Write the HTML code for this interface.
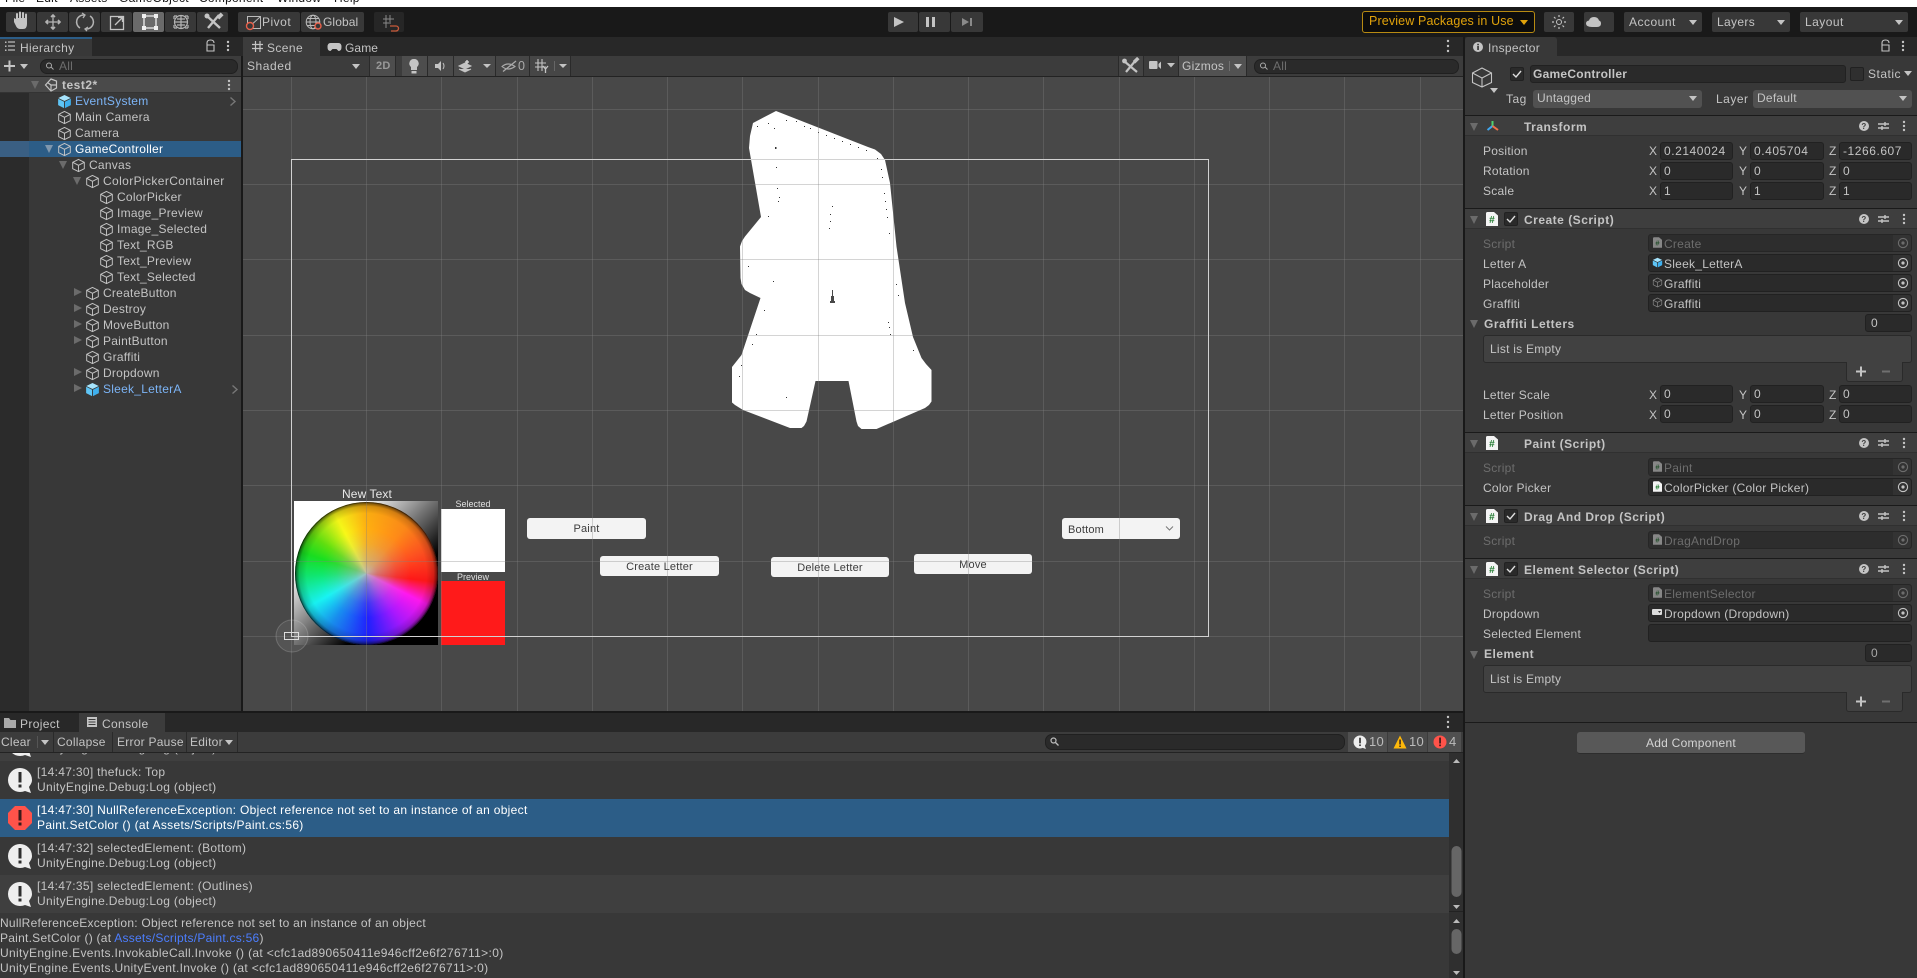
<!DOCTYPE html>
<html><head><meta charset="utf-8"><title>Unity</title>
<style>
html,body{margin:0;padding:0;background:#383838;width:1917px;height:978px;overflow:hidden}
body{position:relative;font-family:"Liberation Sans",sans-serif;font-size:12px;color:#c4c4c4;letter-spacing:.25px}
div,span,svg{position:absolute;box-sizing:border-box}
svg{overflow:visible}
.t{white-space:nowrap;line-height:16px;color:#c4c4c4}
.b{font-weight:bold}
.d{color:#6d6d6d}
.sel{color:#fff}
.blue{color:#7cb4f6}
.tb{top:12px;height:20px;background:#383838;border-radius:2px}
.tbt{top:12px;line-height:20px;color:#c4c4c4;white-space:nowrap;font-size:12px}
.f{background:#2a2a2a;border:1px solid #212121;border-radius:3px;height:18px;line-height:16px;padding-left:3px;color:#c4c4c4;white-space:nowrap}
.o{left:1648px;width:264px;height:18px;background:#2a2a2a;border:1px solid #212121;border-radius:3px}
.o i{position:absolute;right:0;top:0;bottom:0;width:18px;background:#323232;border-radius:0 3px 3px 0}
.h{left:1465px;width:452px;height:21px;background:#3e3e3e;border-top:1px solid #1a1a1a;border-bottom:1px solid #303030}
.dd{background:#515151;border-radius:3px;height:18px;line-height:17px;padding-left:4px;color:#c4c4c4}
.tri{width:0;height:0;border-left:4px solid transparent;border-right:4px solid transparent;border-top:5px solid #c4c4c4}
.fd{width:0;height:0;border-left:4.5px solid transparent;border-right:4.5px solid transparent;border-top:8px solid #6b6b6b}
.fr{width:0;height:0;border-top:4.5px solid transparent;border-bottom:4.5px solid transparent;border-left:8px solid #6b6b6b}
.btn{background:#f3f3f3;border-radius:3px;color:#3c3c3c;font-size:11px;line-height:22px;text-align:center;letter-spacing:.2px}
.log{left:37px;white-space:nowrap;line-height:15px;color:#c4c4c4;letter-spacing:.31px}
.ct{height:20px;top:732px;line-height:20px;color:#c4c4c4;white-space:nowrap}
.sep{width:1px;background:#2a2a2a}
</style></head><body>
<svg width="0" height="0" style="position:absolute">
<symbol id="c" viewBox="0 0 16 16"><path d="M8 1.5L14.2 4.6V11.4L8 14.5L1.8 11.4V4.6ZM1.8 4.6L8 7.8L14.2 4.6M8 7.8V14.5" fill="none" stroke="#c4c4c4" stroke-width="1"/></symbol>
<symbol id="cb" viewBox="0 0 16 16"><path d="M8 1L14.6 4.2L8 7.4L1.4 4.2Z" fill="#a5e3fc"/><path d="M1.2 5L7.5 8.2V15L1.2 11.8Z" fill="#5fc5f6"/><path d="M14.8 5L8.5 8.2V15L14.8 11.8Z" fill="#3fb0ee"/></symbol>
<symbol id="tgt" viewBox="0 0 12 12"><circle cx="6" cy="6" r="4.6" fill="none" stroke="currentColor" stroke-width="1.1"/><circle cx="6" cy="6" r="1.6" fill="currentColor"/></symbol>
<symbol id="scr" viewBox="0 0 12 14"><path d="M0 1.5Q0 0 1.5 0H8L12 3.5V14H0Z" fill="#f4f4f4"/><text x="6" y="11" font-size="10" font-weight="bold" text-anchor="middle" fill="#1f7a2e" font-family="Liberation Sans">#</text></symbol>
<symbol id="hlp" viewBox="0 0 60 14"><circle cx="7" cy="7" r="5" fill="#c4c4c4"/><text x="7" y="10" font-size="8" font-weight="bold" text-anchor="middle" fill="#3e3e3e" font-family="Liberation Sans">?</text><path d="M21 5H32M21 9H32M28 3V7M25 7V11" stroke="#c4c4c4" stroke-width="1.4" fill="none"/><circle cx="47" cy="3" r="1.2" fill="#c4c4c4"/><circle cx="47" cy="7" r="1.2" fill="#c4c4c4"/><circle cx="47" cy="11" r="1.2" fill="#c4c4c4"/></symbol>
<symbol id="info" viewBox="0 0 26 26"><path d="M13 1a12 12 0 1 0 0 24c2 0 3.500-.4 5-1l6 2-2-6c1.200-2 3-4 3-7A12 12 0 0 0 13 1Z" fill="#eee"/><rect x="11.500" y="5" width="3" height="10.500" fill="#2d2d2d"/><rect x="11.500" y="17.500" width="3" height="3" fill="#2d2d2d"/></symbol>
<symbol id="err" viewBox="0 0 26 26"><path d="M8 1H18L25 8V18L18 25H8L1 18V8Z" fill="#ff534a"/><rect x="11.500" y="5" width="3" height="10.500" fill="#3b1b1b"/><rect x="11.500" y="17.500" width="3" height="3" fill="#3b1b1b"/></symbol>
</svg>

<!-- menu strip -->
<div style="left:0;top:0;width:1917px;height:7px;background:#fff;overflow:hidden">
<span class="t" style="left:5px;top:-10px;color:#111">File</span><span class="t" style="left:36px;top:-10px;color:#111">Edit</span><span class="t" style="left:70px;top:-10px;color:#111">Assets</span><span class="t" style="left:119px;top:-10px;color:#111">GameObject</span><span class="t" style="left:199px;top:-10px;color:#111">Component</span><span class="t" style="left:277px;top:-10px;color:#111">Window</span><span class="t" style="left:334px;top:-10px;color:#111">Help</span>
</div>

<!-- toolbar -->
<div style="left:0;top:7px;width:1917px;height:30px;background:#191919"></div>
<div class="tb" style="left:6px;width:30px"></div>
<div class="tb" style="left:37px;width:31px"></div>
<div class="tb" style="left:69px;width:31px"></div>
<div class="tb" style="left:101px;width:31px"></div>
<div class="tb" style="left:133px;width:31px;background:#6a6a6a"></div>
<div class="tb" style="left:165px;width:31px"></div>
<div class="tb" style="left:197px;width:31px"></div>
<svg style="left:0;top:0" width="420" height="37">
<g fill="#c4c4c4"><path d="M14 22V18L16 19V14Q16 13 17 13T18 14V18L19 18V12.500Q19 11.500 20 11.500T21 12.500V18H22V13Q22 12 23 12T24 13V18H25V14.500Q25 13.500 26 13.500T27 14.500V24Q27 29 23 29H20Q18 29 16.500 27Z"/></g>
<g fill="none" stroke="#b4b4b4" stroke-width="1.3"><path d="M53 16V28M47 22H59"/><path d="M51 17L53 15L55 17M51 27L53 29L55 27M48 20L46 22L48 24M58 20L60 22L58 24" stroke-width="1.6"/>
<path d="M80 28A7 7 0 0 1 84 15M90 16A7 7 0 0 1 86 29" stroke-width="1.5"/><path d="M82 13L85 15L83 18M88 27L85 29L87 31" stroke-width="1.3"/>
<rect x="110.500" y="16.500" width="13" height="13" stroke="#c4c4c4"/><path d="M115 25L122 18M118 17.500H122.500V22" stroke="#c4c4c4"/>
<path d="M144 16V28H156V16Z" stroke="#f0f0f0"/></g>
<g fill="#f0f0f0"><rect x="142" y="14" width="4" height="4"/><rect x="154" y="14" width="4" height="4"/><rect x="142" y="26" width="4" height="4"/><rect x="154" y="26" width="4" height="4"/></g>
<g fill="none" stroke="#b4b4b4" stroke-width="1.2"><circle cx="181" cy="22" r="6.500"/><path d="M181 15V29M174 22H188M177 19H185M177 25H185"/><path d="M174 16H177M174 16V19M188 16H185M188 16V19M174 28V25M174 28H177M188 28V25M188 28H185"/></g>
<g fill="none" stroke="#c4c4c4" stroke-width="2.400"><path d="M207 16L220 28M219 15L208 28"/></g><circle cx="207" cy="16" r="2.500" fill="#c4c4c4"/><rect x="217" y="14" width="6" height="4" fill="#c4c4c4" transform="rotate(-45 220 16)"/>
</svg>
<div class="tb" style="left:238px;width:62px"></div>
<div class="tb" style="left:301px;width:63px"></div>
<div class="tb" style="left:374px;width:30px;background:#262626"></div>
<svg style="left:0;top:0" width="420" height="37">
<path d="M247.500 16.500H260.500V28.500H247.500Z" fill="none" stroke="#bbb"/><path d="M248 28L260 17" stroke="#bbb" fill="none"/><circle cx="250" cy="26" r="3.500" fill="#383838" stroke="#e8604a" stroke-width="1.4"/>
<g fill="none" stroke="#bbb"><circle cx="313" cy="22" r="6.800"/><ellipse cx="313" cy="22" rx="3" ry="6.800"/><path d="M306 22H320M307 18.500H319M307 25.500H319"/></g><circle cx="318" cy="26" r="3" fill="#383838" stroke="#e8604a" stroke-width="1.4"/>
<g fill="none" stroke="#888"><path d="M386 15V28M390 15V24M383 19H394M383 23H389"/><path d="M390 26H396A2.500 2.500 0 0 1 396 31H391" stroke="#c85a3a" stroke-width="1.300"/></g>
</svg>
<div class="tbt" style="left:262px;letter-spacing:.5px">Pivot</div>
<div class="tbt" style="left:323px;letter-spacing:.1px">Global</div>
<div class="tb" style="left:888px;width:30px;background:#383838"></div>
<div class="tb" style="left:919px;width:31px"></div>
<div class="tb" style="left:951px;width:32px"></div>
<svg style="left:880px;top:0" width="110" height="37"><path d="M14 17L24 22L14 27Z" fill="#c4c4c4"/><path d="M46 17H49V27H46ZM52 17H55V27H52Z" fill="#c4c4c4"/><path d="M82 18L89 22L82 26Z" fill="#8a8a8a"/><rect x="90" y="18" width="2" height="8" fill="#8a8a8a"/></svg>
<div style="left:1362px;top:11px;width:173px;height:22px;border:1px solid #b78a12;border-radius:3px;background:#0c0c0c"></div>
<div class="t" style="left:1369px;top:13px;color:#e0a20b;font-size:12.500px;letter-spacing:.13px">Preview Packages in Use</div>
<div class="tri" style="left:1520px;top:20px;border-top-color:#e0a20b"></div>
<div class="tb" style="left:1544px;width:30px"></div>
<div class="tb" style="left:1584px;width:30px"></div>
<div class="tb" style="left:1624px;width:78px"></div>
<div class="tb" style="left:1712px;width:78px"></div>
<div class="tb" style="left:1800px;width:108px"></div>
<svg style="left:1540px;top:0" width="80" height="37"><circle cx="19" cy="22" r="2.500" fill="none" stroke="#c4c4c4"/><path d="M19 15V17M19 27V29M12 22H14M24 22H26M14 17L15.500 18.500M24 17L22.500 18.500M14 27L15.500 25.500M24 27L22.500 25.500" stroke="#c4c4c4" stroke-width="1.200"/><path d="M52 27Q46 27 46 23.500Q46 21 49 20.500Q50 17 54 17Q58 17 59 20.500Q61 21 61 23.500Q61 27 57 27Z" fill="#c4c4c4"/></svg>
<div class="tbt" style="left:1629px;letter-spacing:.5px">Account</div><div class="tri" style="left:1689px;top:20px"></div>
<div class="tbt" style="left:1717px;letter-spacing:.35px">Layers</div><div class="tri" style="left:1777px;top:20px"></div>
<div class="tbt" style="left:1805px;letter-spacing:.45px">Layout</div><div class="tri" style="left:1895px;top:20px"></div>

<!-- tab bars -->
<div style="left:0;top:37px;width:1917px;height:19px;background:#282828"></div>
<div style="left:0;top:37px;width:92px;height:19px;background:#383838;border-top:2px solid #2c5d87"></div>
<svg style="left:0;top:37px" width="30" height="19"><path d="M8 5H15M8 9H15M8 13H15" stroke="#bbb" stroke-width="1.300"/><rect x="5" y="4.500" width="1.500" height="1.500" fill="#bbb"/><rect x="5" y="8.500" width="1.500" height="1.500" fill="#bbb"/><rect x="5" y="12.500" width="1.500" height="1.500" fill="#bbb"/></svg>
<div class="t" style="left:20px;top:40px;letter-spacing:.35px">Hierarchy</div>
<svg style="left:200px;top:37px" width="40" height="19"><path d="M7 8V6Q7 3 10.500 3T14 6M7 8H14V14H7Z" fill="none" stroke="#c4c4c4" stroke-width="1.100"/><circle cx="28" cy="5" r="1.200" fill="#c4c4c4"/><circle cx="28" cy="9" r="1.200" fill="#c4c4c4"/><circle cx="28" cy="13" r="1.200" fill="#c4c4c4"/></svg>

<!-- Hierarchy -->
<div style="left:0;top:56px;width:241px;height:21px;background:#3c3c3c;border-bottom:1px solid #232323"></div>
<svg style="left:0;top:56px" width="32" height="20"><path d="M4 10H15M9.500 4.500V15.500" stroke="#c4c4c4" stroke-width="2"/></svg>
<div class="tri" style="left:20px;top:64px"></div>
<div style="left:40px;top:59px;width:198px;height:15px;background:#2a2a2a;border:1px solid #202020;border-radius:7px"></div>
<svg style="left:44px;top:60px" width="12" height="13"><circle cx="5" cy="5.500" r="2.500" fill="none" stroke="#aaa"/><path d="M7 7L9.500 9.500" stroke="#aaa"/></svg>
<div class="t d" style="left:59px;top:58px">All</div>
<div style="left:0;top:77px;width:241px;height:635px;background:#383838"></div>
<div style="left:0;top:77px;width:29px;height:635px;background:#2b2b2b"></div>
<div style="left:0;top:77px;width:241px;height:16px;background:#4a4a4a;border-bottom:1px solid #333"></div>
<div style="left:0;top:141px;width:241px;height:16px;background:#2c5d87"></div>
<div style="left:0;top:141px;width:29px;height:16px;background:#3a5f83"></div>
<div style="left:241px;top:56px;width:2px;height:657px;background:#191919"></div>
<div class="fd" style="left:31px;top:81px"></div>
<svg style="left:44px;top:78px" width="14" height="14"><path d="M7 1L12.500 3V10L7 13L1.500 7L7 1ZM7 7H12.500M7 7L3.500 4.500M7 7V12" fill="none" stroke="#c4c4c4" stroke-width="1.200"/></svg>
<div class="t b" style="left:62px;top:77px;letter-spacing:.5px">test2*</div>
<svg style="left:225px;top:79px" width="8" height="13"><circle cx="4" cy="2" r="1.200" fill="#c4c4c4"/><circle cx="4" cy="6" r="1.200" fill="#c4c4c4"/><circle cx="4" cy="10" r="1.200" fill="#c4c4c4"/></svg>

<svg style="left:57px;top:94px" width="15" height="15"><use href="#cb"/></svg><div class="t blue" style="left:75px;top:93px">EventSystem</div>
<svg style="left:229px;top:97px" width="8" height="9"><path d="M1.500 .5L6 4.500L1.500 8.500" fill="none" stroke="#777" stroke-width="1.400"/></svg>
<svg style="left:57px;top:110px" width="15" height="15"><use href="#c"/></svg><div class="t" style="left:75px;top:109px">Main Camera</div>
<svg style="left:57px;top:126px" width="15" height="15"><use href="#c"/></svg><div class="t" style="left:75px;top:125px">Camera</div>
<div class="fd" style="left:45px;top:145px;border-top-color:#7f97ad"></div>
<svg style="left:57px;top:142px" width="15" height="15"><use href="#c"/></svg><div class="t sel" style="left:75px;top:141px">GameController</div>
<div class="fd" style="left:59px;top:161px"></div>
<svg style="left:71px;top:158px" width="15" height="15"><use href="#c"/></svg><div class="t" style="left:89px;top:157px">Canvas</div>
<div class="fd" style="left:73px;top:177px"></div>
<svg style="left:85px;top:174px" width="15" height="15"><use href="#c"/></svg><div class="t" style="left:103px;top:173px;letter-spacing:.38px">ColorPickerContainer</div>
<svg style="left:99px;top:190px" width="15" height="15"><use href="#c"/></svg><div class="t" style="left:117px;top:189px">ColorPicker</div>
<svg style="left:99px;top:206px" width="15" height="15"><use href="#c"/></svg><div class="t" style="left:117px;top:205px">Image_Preview</div>
<svg style="left:99px;top:222px" width="15" height="15"><use href="#c"/></svg><div class="t" style="left:117px;top:221px">Image_Selected</div>
<svg style="left:99px;top:238px" width="15" height="15"><use href="#c"/></svg><div class="t" style="left:117px;top:237px">Text_RGB</div>
<svg style="left:99px;top:254px" width="15" height="15"><use href="#c"/></svg><div class="t" style="left:117px;top:253px">Text_Preview</div>
<svg style="left:99px;top:270px" width="15" height="15"><use href="#c"/></svg><div class="t" style="left:117px;top:269px">Text_Selected</div>
<div class="fr" style="left:74px;top:288px"></div><svg style="left:85px;top:286px" width="15" height="15"><use href="#c"/></svg><div class="t" style="left:103px;top:285px">CreateButton</div>
<div class="fr" style="left:74px;top:304px"></div><svg style="left:85px;top:302px" width="15" height="15"><use href="#c"/></svg><div class="t" style="left:103px;top:301px">Destroy</div>
<div class="fr" style="left:74px;top:320px"></div><svg style="left:85px;top:318px" width="15" height="15"><use href="#c"/></svg><div class="t" style="left:103px;top:317px">MoveButton</div>
<div class="fr" style="left:74px;top:336px"></div><svg style="left:85px;top:334px" width="15" height="15"><use href="#c"/></svg><div class="t" style="left:103px;top:333px">PaintButton</div>
<svg style="left:85px;top:350px" width="15" height="15"><use href="#c"/></svg><div class="t" style="left:103px;top:349px">Graffiti</div>
<div class="fr" style="left:74px;top:368px"></div><svg style="left:85px;top:366px" width="15" height="15"><use href="#c"/></svg><div class="t" style="left:103px;top:365px">Dropdown</div>
<div class="fr" style="left:74px;top:384px"></div><svg style="left:85px;top:382px" width="15" height="15"><use href="#cb"/></svg><div class="t blue" style="left:103px;top:381px">Sleek_LetterA</div>
<svg style="left:231px;top:385px" width="8" height="9"><path d="M1.500 .5L6 4.500L1.500 8.500" fill="none" stroke="#777" stroke-width="1.400"/></svg>

<!-- Scene tabs & toolbar -->
<div style="left:243px;top:37px;width:77px;height:19px;background:#3c3c3c"></div>
<svg style="left:251px;top:40px" width="14" height="14"><path d="M4.500 1V12M9 1V12M1 4.500H12M1 8.500H12" stroke="#c4c4c4" stroke-width="1.200"/></svg>
<div class="t" style="left:267px;top:40px;letter-spacing:.4px">Scene</div>
<svg style="left:327px;top:41px" width="16" height="12"><path d="M3 2H11Q14 2 14 6T11 10L9 8H5L3 10Q0 10 0 6T3 2Z" fill="#c4c4c4" transform="translate(.5 0)"/></svg>
<div class="t" style="left:345px;top:40px;letter-spacing:.1px">Game</div>
<svg style="left:1444px;top:38px" width="8" height="16"><circle cx="4" cy="3" r="1.200" fill="#c4c4c4"/><circle cx="4" cy="8" r="1.200" fill="#c4c4c4"/><circle cx="4" cy="13" r="1.200" fill="#c4c4c4"/></svg>
<div style="left:243px;top:56px;width:1220px;height:21px;background:#3c3c3c;border-bottom:1px solid #232323"></div>
<div class="t" style="left:247px;top:58px;letter-spacing:.55px">Shaded</div>
<div class="tri" style="left:352px;top:64px"></div>
<div class="sep" style="left:369px;top:56px;height:20px"></div>
<div style="left:370px;top:56px;width:25px;height:20px;background:#4d4d4d"></div><div class="t b" style="left:376px;top:58px;color:#999;font-size:11px">2D</div>
<div class="sep" style="left:395px;top:56px;height:20px"></div>
<div style="left:402px;top:56px;width:25px;height:20px;background:#4d4d4d"></div>
<div style="left:427px;top:56px;width:26px;height:20px;background:#4a4a4a"></div>
<div style="left:454px;top:56px;width:41px;height:20px;background:#4a4a4a"></div>
<div style="left:496px;top:56px;width:33px;height:20px;background:#464646"></div>
<div style="left:530px;top:56px;width:40px;height:20px;background:#464646"></div>
<div class="sep" style="left:427px;top:56px;height:20px"></div><div class="sep" style="left:453px;top:56px;height:20px"></div><div class="sep" style="left:495px;top:56px;height:20px"></div><div class="sep" style="left:529px;top:56px;height:20px"></div><div class="sep" style="left:570px;top:56px;height:20px"></div>
<svg style="left:400px;top:56px" width="180" height="20"><path d="M14 3A4.500 4.500 0 0 1 17 11V14H11V11A4.500 4.500 0 0 1 14 3Z" fill="#c4c4c4"/><rect x="11.500" y="15" width="5" height="2.500" fill="#c4c4c4"/>
<path d="M35 8H38L41 5V15L38 12H35Z" fill="#c4c4c4"/><path d="M43 7Q45 10 43 13" stroke="#c4c4c4" fill="none"/>
<path d="M59 10L65 7L71 10L65 13ZM59 13L65 16L71 13" fill="#c4c4c4" stroke="#c4c4c4"/><path d="M67 4V8M65 6H69" stroke="#ddd" stroke-width="1.300"/>
<path d="M83 8H91L87 12Z" fill="#c4c4c4"/>
<path d="M102 10.500Q108 5.500 115 10.500Q108 15.500 102 10.500Z" fill="none" stroke="#aaa" stroke-width="1.100"/><path d="M103 15.500L116 5" stroke="#aaa" stroke-width="1.300"/>
<g stroke="#c4c4c4" stroke-width="1.100" fill="none"><path d="M138 3V15M142 3V15M135 7H146M135 11H146"/><path d="M143 10L145.500 13L148 10M145.500 13V17" stroke-width="1.300"/></g>
<path d="M154.500 5V15" stroke="#666"/><path d="M159 8H167L163 12Z" fill="#c4c4c4"/></svg>
<div class="t" style="left:518px;top:58px;color:#aaa;font-size:12.500px">0</div>
<div class="sep" style="left:1118px;top:56px;height:20px"></div><div class="sep" style="left:1143px;top:56px;height:20px"></div><div class="sep" style="left:1178px;top:56px;height:20px"></div><div class="sep" style="left:1246px;top:56px;height:20px"></div>
<div style="left:1119px;top:56px;width:24px;height:20px;background:#444"></div>
<div style="left:1179px;top:56px;width:67px;height:20px;background:#525252"></div>
<svg style="left:1120px;top:57px" width="24" height="19"><path d="M4 4L17 15M16 3L6 15" stroke="#c4c4c4" stroke-width="2.200"/><circle cx="4.500" cy="4" r="2.400" fill="#c4c4c4"/><rect x="13" y="1.500" width="6" height="3.500" fill="#c4c4c4" transform="rotate(-45 16 3)"/></svg>
<svg style="left:1148px;top:59px" width="28" height="14"><rect x="1" y="2" width="8.500" height="8" rx="1" fill="#c4c4c4"/><path d="M10.500 5L13 2.500V10L10.500 7.500Z" fill="#c4c4c4"/><path d="M19 4H27L23 8.500Z" fill="#c4c4c4"/></svg>
<div class="t" style="left:1182px;top:58px;letter-spacing:.25px">Gizmos</div>
<div style="left:1229px;top:61px;width:1px;height:10px;background:#707070"></div>
<div class="tri" style="left:1234px;top:64px"></div>
<div style="left:1254px;top:59px;width:205px;height:15px;background:#2a2a2a;border:1px solid #202020;border-radius:7px"></div>
<svg style="left:1258px;top:60px" width="12" height="13"><circle cx="5" cy="5.500" r="2.500" fill="none" stroke="#aaa"/><path d="M7 7L9.500 9.500" stroke="#aaa"/></svg>
<div class="t d" style="left:1273px;top:58px">All</div>

<!-- Scene view -->
<div style="left:243px;top:77px;width:1220px;height:635px;background:#484848;overflow:hidden"></div>
<svg style="left:0;top:0" width="1917" height="978">
<polygon fill="#fff" points="776,111 868,147 875,149.500 881,154 885,160 890,183 896.500,246.500 905,303 913,337 921.500,358 926,364 931.500,370 931.500,401.500 929,405 925,408 876.500,429 861.500,429 858,426 856.500,421.500 848.500,381 815.500,381 806.500,421.500 804,426 801.500,428 790,428 743,410 735,405 732,402.500 732,367 741.500,355 760.500,298 750,293 745,290 741.500,284 740.500,278 740,246.500 742,241 745,236.500 761,217 749,148 750,136 753,123"/>
<g fill="#333"><rect x="775" y="147" width="1.500" height="2"/><rect x="776" y="167" width="1" height="1"/><rect x="777" y="188" width="1" height="1"/><rect x="779" y="197" width="1" height="1"/><rect x="778" y="201" width="1" height="1"/><rect x="768" y="216" width="1" height="1"/><rect x="832" y="206" width="1" height="1"/><rect x="830" y="214" width="1" height="1"/><rect x="830" y="221" width="1" height="1"/><rect x="829" y="228" width="1" height="1"/><rect x="889" y="233" width="1" height="1"/><rect x="887" y="217" width="1" height="1"/><rect x="886" y="209" width="1" height="1"/><rect x="885" y="201" width="1" height="1"/><rect x="884" y="193" width="1" height="1"/><rect x="882" y="177" width="1" height="1"/><rect x="881" y="169" width="1" height="1"/><rect x="796" y="121" width="1" height="1"/><rect x="804" y="126" width="1" height="1"/><rect x="810" y="128" width="1" height="1"/><rect x="818" y="132" width="1" height="1"/><rect x="826" y="135" width="1" height="1"/><rect x="834" y="138" width="1" height="1"/><rect x="842" y="141" width="1" height="1"/><rect x="850" y="144" width="1" height="1"/><rect x="858" y="147" width="1" height="1"/><rect x="866" y="150" width="1" height="1"/><rect x="877" y="158" width="1" height="1"/><rect x="757" y="126" width="1" height="1"/><rect x="768" y="123" width="1" height="1"/><rect x="786" y="120" width="1" height="1"/><rect x="774" y="128" width="1" height="1"/><rect x="748" y="266" width="1" height="1"/><rect x="773" y="281" width="1" height="1"/><rect x="896" y="284" width="1" height="1"/><rect x="898" y="295" width="1" height="1"/><rect x="764" y="310" width="1" height="1"/><rect x="888" y="322" width="1" height="1"/><rect x="889" y="327" width="1" height="1"/><rect x="890" y="334" width="1" height="1"/><rect x="756" y="334" width="1" height="1"/><rect x="752" y="344" width="1" height="1"/><rect x="913" y="350" width="1" height="1"/><rect x="741" y="365" width="1" height="1"/><rect x="739" y="376" width="1" height="1"/><rect x="786" y="397" width="1" height="1"/></g>
<path d="M832 290H833V296H834V301H835V303H830V301H831V296H832Z" fill="#484848"/>
</svg>

<!-- Color picker -->
<div style="left:294px;top:501px;width:144px;height:144px;background:linear-gradient(135deg,#fff 24%,#9a9a9a 42%,#6a6a6a 50%,#000 68%)"></div>
<div style="left:294.500px;top:501.500px;width:143px;height:143px;border-radius:50%;background:conic-gradient(#ffb010 0deg,#ff8a18 40deg,#ff5020 70deg,#ff1818 97deg,#ff18f0 117deg,#a818ff 145deg,#2020ff 178deg,#1890f0 215deg,#18f4f4 240deg,#10e870 268deg,#18e020 288deg,#60e010 305deg,#f8f818 332deg,#ffb010 360deg)"></div>
<div style="left:294.500px;top:501.500px;width:143px;height:143px;border-radius:50%;background:radial-gradient(circle closest-side,rgba(185,185,185,.9) 0,rgba(180,180,180,.55) 15%,rgba(180,180,180,.15) 42%,rgba(0,0,0,0) 62%,rgba(0,0,0,.02) 84%,rgba(0,0,0,.18) 94%,rgba(0,0,0,.5) 98%,rgba(0,0,0,.9) 100%)"></div>
<div style="left:441px;top:509px;width:64px;height:63px;background:#fff"></div>
<div style="left:441px;top:581px;width:64px;height:64px;background:#ff1a1a"></div>
<div class="t" style="left:294px;width:146px;text-align:center;top:486px;font-size:12px;color:#e8e8e8;letter-spacing:.1px">New Text</div>
<div class="t" style="left:441px;width:64px;text-align:center;top:496px;font-size:9px;color:#e0e0e0;letter-spacing:0">Selected</div>
<div class="t" style="left:441px;width:64px;text-align:center;top:569px;font-size:9px;color:#e0e0e0;letter-spacing:0">Preview</div>

<div class="btn" style="left:527px;top:518px;width:119px;height:21px">Paint</div>
<div class="btn" style="left:600px;top:556px;width:119px;height:20px;line-height:23px">Create Letter</div>
<div class="btn" style="left:771px;top:557px;width:118px;height:20px;line-height:23px">Delete Letter</div>
<div class="btn" style="left:914px;top:554px;width:118px;height:20px;">Move</div>
<div class="btn" style="left:1062px;top:518px;width:118px;height:21px;text-align:left;padding-left:6px;line-height:24px">Bottom</div>
<svg style="left:1165px;top:525px" width="10" height="8"><path d="M1 1.500L4.500 5L8 1.500" fill="none" stroke="#777"/></svg>

<!-- Grid overlay -->
<svg style="left:0;top:0;pointer-events:none" width="1917" height="978">
<g stroke="rgba(128,128,128,.34)" stroke-width="1"><path d="M366.500 77V712M441.500 77V712M517.500 77V712M592.500 77V712M667.500 77V712M742.500 77V712M818.500 77V712M893.500 77V712M968.500 77V712M1043.500 77V712M1119.500 77V712M1194.500 77V712M1269.500 77V712M1344.500 77V712M1420.500 77V712"/>
<path d="M243 109.500H1463M243 184.500H1463M243 259.500H1463M243 335.500H1463M243 410.500H1463M243 485.500H1463M243 561.500H1463M243 636.500H1463"/></g>
<path d="M291.500 77V712" stroke="rgba(128,128,128,.34)"/>
<rect x="291.500" y="159.500" width="917" height="477" fill="none" stroke="#d2d2d2"/>
<circle cx="292" cy="636" r="16" fill="rgba(200,200,200,.1)" stroke="rgba(210,210,210,.25)"/>
<rect x="284.500" y="632.500" width="14" height="7" fill="none" stroke="#ddd"/>
</svg>

<!-- Console -->
<div style="left:0;top:711px;width:1464px;height:2px;background:#191919"></div>
<div style="left:0;top:713px;width:1464px;height:19px;background:#282828"></div>
<div style="left:79px;top:713px;width:86px;height:19px;background:#3c3c3c"></div>
<svg style="left:4px;top:716px" width="14" height="13"><path d="M0 2H5L6.500 4H12V12H0Z" fill="#aaa"/></svg>
<div class="t" style="left:20px;top:716px;letter-spacing:.35px">Project</div>
<svg style="left:87px;top:717px" width="12" height="12"><rect x="0" y="0" width="10" height="10" fill="#c4c4c4"/><path d="M1.500 2.500H8.500M1.500 5H8.500M1.500 7.500H8.500" stroke="#3c3c3c"/></svg>
<div class="t" style="left:102px;top:716px;letter-spacing:.35px">Console</div>
<svg style="left:1444px;top:714px" width="8" height="16"><circle cx="4" cy="3" r="1.200" fill="#c4c4c4"/><circle cx="4" cy="8" r="1.200" fill="#c4c4c4"/><circle cx="4" cy="13" r="1.200" fill="#c4c4c4"/></svg>
<div style="left:0;top:732px;width:1464px;height:21px;background:#3c3c3c;border-bottom:1px solid #232323"></div>
<div class="ct" style="left:1px">Clear</div><div class="sep" style="left:37px;top:736px;height:12px;background:#555"></div><div class="tri" style="left:41px;top:740px"></div><div class="sep" style="left:53px;top:732px;height:20px"></div>
<div class="ct" style="left:57px">Collapse</div><div class="sep" style="left:112px;top:732px;height:20px"></div>
<div class="ct" style="left:117px">Error Pause</div><div class="sep" style="left:186px;top:732px;height:20px"></div>
<div class="ct" style="left:190px">Editor</div><div class="tri" style="left:225px;top:740px"></div><div class="sep" style="left:237px;top:732px;height:20px"></div>
<div style="left:1045px;top:734px;width:300px;height:16px;background:#2a2a2a;border:1px solid #202020;border-radius:7px"></div>
<svg style="left:1049px;top:736px" width="12" height="12"><circle cx="4.500" cy="4.500" r="2.500" fill="none" stroke="#bbb" stroke-width="1.200"/><path d="M6.500 6.500L9.500 9.500" stroke="#bbb" stroke-width="1.300"/></svg>
<div style="left:1348px;top:732px;width:39px;height:20px;background:#505050"></div>
<div style="left:1388px;top:732px;width:39px;height:20px;background:#4a4a4a"></div>
<div style="left:1428px;top:732px;width:33px;height:20px;background:#505050"></div>
<svg style="left:1353px;top:735px" width="14" height="14"><use href="#info"/></svg>
<div class="ct" style="left:1369px;font-size:13px;color:#bbb">10</div>
<svg style="left:1393px;top:735px" width="14" height="14"><path d="M7 .5L13.500 13.500H.5Z" fill="#fdb80a"/><rect x="6.300" y="4.500" width="1.500" height="5" fill="#322"/><rect x="6.300" y="10.500" width="1.500" height="1.500" fill="#322"/></svg>
<div class="ct" style="left:1409px;font-size:13px;color:#bbb">10</div>
<svg style="left:1433px;top:735px" width="14" height="14"><circle cx="7" cy="7" r="6.500" fill="#ff534a"/><rect x="6.200" y="2.500" width="1.700" height="6" fill="#3b1b1b"/><rect x="6.200" y="9.500" width="1.700" height="1.700" fill="#3b1b1b"/></svg>
<div class="ct" style="left:1449px;font-size:13px;color:#bbb">4</div>

<div style="left:0;top:753px;width:1449px;height:8px;background:#3f3f3f;overflow:hidden">
<svg style="left:7px;top:-22px" width="26" height="27"><use href="#info" width="26" height="26"/></svg>
<div class="log" style="top:-12px">UnityEngine.Debug:Log (object)</div>
</div>
<div style="left:0;top:761px;width:1449px;height:38px;background:#383838"></div>
<div style="left:0;top:799px;width:1449px;height:38px;background:#2c5d87"></div>
<div style="left:0;top:837px;width:1449px;height:38px;background:#383838"></div>
<div style="left:0;top:875px;width:1449px;height:38px;background:#3f3f3f"></div>
<div style="left:0;top:913px;width:1449px;height:65px;background:#383838"></div>
<div style="left:1449px;top:753px;width:14px;height:225px;background:#2f2f2f"></div>
<div style="left:1449px;top:911px;width:14px;height:1px;background:#222"></div>
<svg style="left:7px;top:767px" width="26" height="27"><use href="#info" width="26" height="26"/></svg>
<svg style="left:7px;top:805px" width="26" height="27"><use href="#err" width="26" height="26"/></svg>
<svg style="left:7px;top:843px" width="26" height="27"><use href="#info" width="26" height="26"/></svg>
<svg style="left:7px;top:881px" width="26" height="27"><use href="#info" width="26" height="26"/></svg>
<div class="log" style="top:765px">[14:47:30] thefuck: Top</div>
<div class="log" style="top:780px">UnityEngine.Debug:Log (object)</div>
<div class="log" style="top:803px;color:#fff">[14:47:30] NullReferenceException: Object reference not set to an instance of an object</div>
<div class="log" style="top:818px;color:#fff">Paint.SetColor () (at Assets/Scripts/Paint.cs:56)</div>
<div class="log" style="top:841px">[14:47:32] selectedElement: (Bottom)</div>
<div class="log" style="top:856px">UnityEngine.Debug:Log (object)</div>
<div class="log" style="top:879px">[14:47:35] selectedElement: (Outlines)</div>
<div class="log" style="top:894px">UnityEngine.Debug:Log (object)</div>
<div class="log" style="left:0;top:916px;letter-spacing:.25px">NullReferenceException: Object reference not set to an instance of an object</div>
<div class="log" style="left:0;top:931px;letter-spacing:.25px">Paint.SetColor () (at <span style="position:static;color:#4c7eff">Assets/Scripts/Paint.cs:56</span>)</div>
<div class="log" style="left:0;top:946px;letter-spacing:.34px">UnityEngine.Events.InvokableCall.Invoke () (at &lt;cfc1ad890650411e946cff2e6f276711&gt;:0)</div>
<div class="log" style="left:0;top:961px;letter-spacing:.34px">UnityEngine.Events.UnityEvent.Invoke () (at &lt;cfc1ad890650411e946cff2e6f276711&gt;:0)</div>
<svg style="left:1449px;top:753px" width="14" height="225">
<path d="M4 10L7.500 6L11 10Z" fill="#bbb"/><rect x="2.500" y="93" width="10" height="51" rx="5" fill="#666"/><path d="M4 152L7.500 156L11 152Z" fill="#bbb"/>
<path d="M4 170L7.500 166L11 170Z" fill="#bbb"/><rect x="2.500" y="176" width="10" height="25" rx="5" fill="#666"/><path d="M4 218L7.500 222L11 218Z" fill="#bbb"/></svg>
<div style="left:1463px;top:37px;width:2px;height:941px;background:#191919"></div>

<!-- Inspector -->
<div style="left:1465px;top:37px;width:452px;height:941px;background:#383838"></div>
<div style="left:1465px;top:37px;width:452px;height:19px;background:#282828"></div>
<div style="left:1465px;top:37px;width:92px;height:19px;background:#383838;border-radius:3px 3px 0 0"></div>
<svg style="left:1472px;top:41px" width="12" height="12"><circle cx="6" cy="6" r="5" fill="#c4c4c4"/><rect x="5.200" y="5" width="1.700" height="4" fill="#383838"/><rect x="5.200" y="2.800" width="1.700" height="1.500" fill="#383838"/></svg>
<div class="t" style="left:1488px;top:40px;letter-spacing:.3px">Inspector</div>
<svg style="left:1880px;top:37px" width="32" height="19"><path d="M2 8V6Q2 3 5.500 3T9 6M2 8H9V14H2Z" fill="none" stroke="#c4c4c4" stroke-width="1.100"/><circle cx="23" cy="5" r="1.200" fill="#c4c4c4"/><circle cx="23" cy="9" r="1.200" fill="#c4c4c4"/><circle cx="23" cy="13" r="1.200" fill="#c4c4c4"/></svg>

<svg style="left:1471px;top:66px" width="22" height="22"><path d="M11 2L20.500 7V16.500L11 21L1.500 16.500V7ZM1.500 7L11 12L20.500 7M11 12V21" fill="none" stroke="#c4c4c4" stroke-width="1.100"/></svg>
<div class="tri" style="left:1490px;top:88px"></div>
<div style="left:1510px;top:67px;width:14px;height:14px;background:#2a2a2a;border:1px solid #212121;border-radius:2px"></div>
<svg style="left:1512px;top:69px" width="10" height="10"><path d="M1 5L4 8L9 2" fill="none" stroke="#ddd" stroke-width="1.400"/></svg>
<div class="f b" style="left:1530px;top:65px;width:316px;height:18px;padding-left:2px">GameController</div>
<div style="left:1850px;top:67px;width:14px;height:14px;background:#2f2f2f;border:1px solid #212121;border-radius:2px"></div>
<div class="t" style="left:1868px;top:66px;letter-spacing:.5px">Static</div>
<div class="tri" style="left:1904px;top:71px"></div>
<div class="t" style="left:1506px;top:91px;letter-spacing:.5px">Tag</div>
<div class="dd" style="left:1533px;top:90px;width:169px">Untagged</div><div class="tri" style="left:1689px;top:96px"></div>
<div class="t" style="left:1716px;top:91px;letter-spacing:.5px">Layer</div>
<div class="dd" style="left:1753px;top:90px;width:159px">Default</div><div class="tri" style="left:1899px;top:96px"></div>

<!-- Transform -->
<div class="h" style="top:115px"></div>
<div class="fd" style="left:1470px;top:123px"></div>
<svg style="left:1486px;top:118px" width="14" height="16"><path d="M6.500 3V8" stroke="#4dd36f" stroke-width="2"/><path d="M6.500 8L1.500 12" stroke="#3fa7ef" stroke-width="2"/><path d="M6.500 8L12 12" stroke="#f0714a" stroke-width="2"/></svg>
<div class="t b" style="left:1524px;top:119px;letter-spacing:.5px">Transform</div>
<svg style="left:1857px;top:119px" width="60" height="14"><use href="#hlp"/></svg>
<div class="t" style="left:1483px;top:143px">Position</div>
<div class="t" style="left:1483px;top:163px">Rotation</div>
<div class="t" style="left:1483px;top:183px">Scale</div>
<div class="t" style="left:1649px;top:143px">X</div><div class="f" style="left:1660px;top:142px;width:73px;letter-spacing:.55px">0.2140024</div>
<div class="t" style="left:1739px;top:143px">Y</div><div class="f" style="left:1750px;top:142px;width:74px;letter-spacing:.55px">0.405704</div>
<div class="t" style="left:1829px;top:143px">Z</div><div class="f" style="left:1839px;top:142px;width:73px;letter-spacing:.55px">-1266.607</div>
<div class="t" style="left:1649px;top:163px">X</div><div class="f" style="left:1660px;top:162px;width:73px">0</div>
<div class="t" style="left:1739px;top:163px">Y</div><div class="f" style="left:1750px;top:162px;width:74px">0</div>
<div class="t" style="left:1829px;top:163px">Z</div><div class="f" style="left:1839px;top:162px;width:73px">0</div>
<div class="t" style="left:1649px;top:183px">X</div><div class="f" style="left:1660px;top:182px;width:73px">1</div>
<div class="t" style="left:1739px;top:183px">Y</div><div class="f" style="left:1750px;top:182px;width:74px">1</div>
<div class="t" style="left:1829px;top:183px">Z</div><div class="f" style="left:1839px;top:182px;width:73px">1</div>

<!-- Create -->
<div class="h" style="top:208px"></div>
<div class="fd" style="left:1470px;top:216px"></div>
<svg style="left:1486px;top:212px" width="12" height="14"><use href="#scr"/></svg>
<div style="left:1504px;top:212px;width:14px;height:14px;background:#2a2a2a;border:1px solid #212121;border-radius:2px"></div>
<svg style="left:1506px;top:214px" width="10" height="10"><path d="M1 5L4 8L9 2" fill="none" stroke="#ddd" stroke-width="1.400"/></svg>
<div class="t b" style="left:1524px;top:212px;letter-spacing:.5px">Create (Script)</div>
<svg style="left:1857px;top:212px" width="60" height="14"><use href="#hlp"/></svg>
<div class="t d" style="left:1483px;top:236px">Script</div>
<div class="o" style="top:234px;opacity:.75"><i></i></div>
<svg style="left:1653px;top:237px" width="9" height="11" opacity=".45"><use href="#scr"/></svg><div class="t d" style="left:1664px;top:236px">Create</div>
<svg style="left:1897px;top:237px;color:#6d6d6d" width="12" height="12"><use href="#tgt"/></svg>
<div class="t" style="left:1483px;top:256px">Letter A</div>
<div class="o" style="top:254px"><i></i></div>
<svg style="left:1652px;top:257px" width="11" height="11"><use href="#cb"/></svg><div class="t" style="left:1664px;top:256px">Sleek_LetterA</div>
<svg style="left:1897px;top:257px;color:#c4c4c4" width="12" height="12"><use href="#tgt"/></svg>
<div class="t" style="left:1483px;top:276px">Placeholder</div>
<div class="o" style="top:274px"><i></i></div>
<svg style="left:1652px;top:277px" width="11" height="11" opacity=".6"><use href="#c"/></svg><div class="t" style="left:1664px;top:276px">Graffiti</div>
<svg style="left:1897px;top:277px;color:#c4c4c4" width="12" height="12"><use href="#tgt"/></svg>
<div class="t" style="left:1483px;top:296px">Graffiti</div>
<div class="o" style="top:294px"><i></i></div>
<svg style="left:1652px;top:297px" width="11" height="11" opacity=".6"><use href="#c"/></svg><div class="t" style="left:1664px;top:296px">Graffiti</div>
<svg style="left:1897px;top:297px;color:#c4c4c4" width="12" height="12"><use href="#tgt"/></svg>
<div class="fd" style="left:1470px;top:320px"></div>
<div class="t b" style="left:1484px;top:316px;letter-spacing:.5px">Graffiti Letters</div>
<div class="f" style="left:1865px;top:314px;width:47px;padding-left:5px">0</div>
<div style="left:1483px;top:335px;width:429px;height:28px;background:#414141;border:1px solid #2a2a2a;border-radius:3px"></div>
<div class="t" style="left:1490px;top:341px">List is Empty</div>
<div style="left:1846px;top:362px;width:57px;height:20px;background:#414141;border:1px solid #2a2a2a;border-top:0;border-radius:0 0 3px 3px"></div>
<svg style="left:1855px;top:365px" width="40" height="14"><path d="M1 6.500H11M6 1.500V11.500" stroke="#c4c4c4" stroke-width="2"/><path d="M27 6.500H35" stroke="#707070" stroke-width="2"/></svg>
<div class="t" style="left:1483px;top:387px">Letter Scale</div>
<div class="t" style="left:1649px;top:387px">X</div><div class="f" style="left:1660px;top:385px;width:73px">0</div>
<div class="t" style="left:1739px;top:387px">Y</div><div class="f" style="left:1750px;top:385px;width:74px">0</div>
<div class="t" style="left:1829px;top:387px">Z</div><div class="f" style="left:1839px;top:385px;width:73px">0</div>
<div class="t" style="left:1483px;top:407px">Letter Position</div>
<div class="t" style="left:1649px;top:407px">X</div><div class="f" style="left:1660px;top:405px;width:73px">0</div>
<div class="t" style="left:1739px;top:407px">Y</div><div class="f" style="left:1750px;top:405px;width:74px">0</div>
<div class="t" style="left:1829px;top:407px">Z</div><div class="f" style="left:1839px;top:405px;width:73px">0</div>

<!-- Paint -->
<div class="h" style="top:432px"></div>
<div class="fd" style="left:1470px;top:440px"></div>
<svg style="left:1486px;top:436px" width="12" height="14"><use href="#scr"/></svg>
<div class="t b" style="left:1524px;top:436px;letter-spacing:.5px">Paint (Script)</div>
<svg style="left:1857px;top:436px" width="60" height="14"><use href="#hlp"/></svg>
<div class="t d" style="left:1483px;top:460px">Script</div>
<div class="o" style="top:458px;opacity:.75"><i></i></div>
<svg style="left:1653px;top:461px" width="9" height="11" opacity=".45"><use href="#scr"/></svg><div class="t d" style="left:1664px;top:460px">Paint</div>
<svg style="left:1897px;top:461px;color:#6d6d6d" width="12" height="12"><use href="#tgt"/></svg>
<div class="t" style="left:1483px;top:480px">Color Picker</div>
<div class="o" style="top:478px"><i></i></div>
<svg style="left:1653px;top:481px" width="9" height="11"><use href="#scr"/></svg><div class="t" style="left:1664px;top:480px">ColorPicker (Color Picker)</div>
<svg style="left:1897px;top:481px;color:#c4c4c4" width="12" height="12"><use href="#tgt"/></svg>

<!-- Drag -->
<div class="h" style="top:505px"></div>
<div class="fd" style="left:1470px;top:513px"></div>
<svg style="left:1486px;top:509px" width="12" height="14"><use href="#scr"/></svg>
<div style="left:1504px;top:509px;width:14px;height:14px;background:#2a2a2a;border:1px solid #212121;border-radius:2px"></div>
<svg style="left:1506px;top:511px" width="10" height="10"><path d="M1 5L4 8L9 2" fill="none" stroke="#ddd" stroke-width="1.400"/></svg>
<div class="t b" style="left:1524px;top:509px;letter-spacing:.5px">Drag And Drop (Script)</div>
<svg style="left:1857px;top:509px" width="60" height="14"><use href="#hlp"/></svg>
<div class="t d" style="left:1483px;top:533px">Script</div>
<div class="o" style="top:531px;opacity:.75"><i></i></div>
<svg style="left:1653px;top:534px" width="9" height="11" opacity=".45"><use href="#scr"/></svg><div class="t d" style="left:1664px;top:533px">DragAndDrop</div>
<svg style="left:1897px;top:534px;color:#6d6d6d" width="12" height="12"><use href="#tgt"/></svg>

<!-- Element selector -->
<div class="h" style="top:558px"></div>
<div class="fd" style="left:1470px;top:566px"></div>
<svg style="left:1486px;top:562px" width="12" height="14"><use href="#scr"/></svg>
<div style="left:1504px;top:562px;width:14px;height:14px;background:#2a2a2a;border:1px solid #212121;border-radius:2px"></div>
<svg style="left:1506px;top:564px" width="10" height="10"><path d="M1 5L4 8L9 2" fill="none" stroke="#ddd" stroke-width="1.400"/></svg>
<div class="t b" style="left:1524px;top:562px;letter-spacing:.5px">Element Selector (Script)</div>
<svg style="left:1857px;top:562px" width="60" height="14"><use href="#hlp"/></svg>
<div class="t d" style="left:1483px;top:586px">Script</div>
<div class="o" style="top:584px;opacity:.75"><i></i></div>
<svg style="left:1653px;top:587px" width="9" height="11" opacity=".45"><use href="#scr"/></svg><div class="t d" style="left:1664px;top:586px">ElementSelector</div>
<svg style="left:1897px;top:587px;color:#6d6d6d" width="12" height="12"><use href="#tgt"/></svg>
<div class="t" style="left:1483px;top:606px">Dropdown</div>
<div class="o" style="top:604px"><i></i></div>
<svg style="left:1652px;top:608px" width="11" height="9"><rect x="0" y="1" width="10" height="6" rx="1" fill="#ddd"/><path d="M6 3H9L7.500 5Z" fill="#333"/></svg><div class="t" style="left:1664px;top:606px">Dropdown (Dropdown)</div>
<svg style="left:1897px;top:607px;color:#c4c4c4" width="12" height="12"><use href="#tgt"/></svg>
<div class="t" style="left:1483px;top:626px">Selected Element</div>
<div class="o" style="top:624px"></div>
<div class="fd" style="left:1470px;top:651px"></div>
<div class="t b" style="left:1484px;top:646px;letter-spacing:.5px">Element</div>
<div class="f" style="left:1865px;top:644px;width:47px;padding-left:5px;color:#a8a8a8">0</div>
<div style="left:1483px;top:665px;width:429px;height:28px;background:#414141;border:1px solid #2a2a2a;border-radius:3px"></div>
<div class="t" style="left:1490px;top:671px">List is Empty</div>
<div style="left:1846px;top:692px;width:57px;height:20px;background:#414141;border:1px solid #2a2a2a;border-top:0;border-radius:0 0 3px 3px"></div>
<svg style="left:1855px;top:695px" width="40" height="14"><path d="M1 6.500H11M6 1.500V11.500" stroke="#c4c4c4" stroke-width="2"/><path d="M27 6.500H35" stroke="#707070" stroke-width="2"/></svg>
<div style="left:1465px;top:722px;width:452px;height:1px;background:#1a1a1a"></div>
<div style="left:1577px;top:732px;width:228px;height:22px;background:#585858;border-radius:3px;border-bottom:1px solid #2d2d2d;text-align:center;line-height:23px;color:#d4d4d4">Add Component</div>
</body></html>
